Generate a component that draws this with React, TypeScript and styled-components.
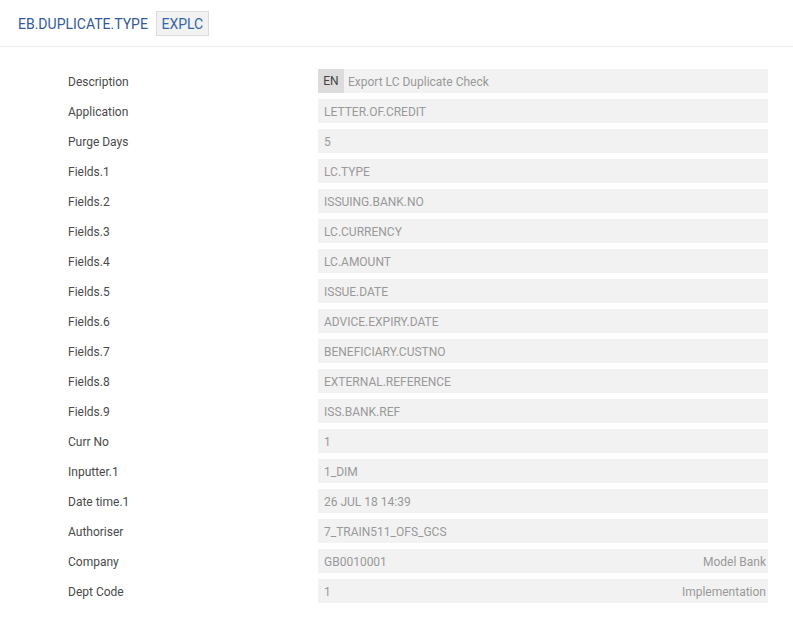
import React from 'react'
import styled, { createGlobalStyle } from 'styled-components'

const GlobalStyle = createGlobalStyle`
  body {
    margin: 0;
    background: #fff;
    font-family: Roboto, "Liberation Sans", sans-serif;
  }
`

type Row = { label: string; value: string; lang?: string; extra?: string }

const rows: Row[] = [
  { label: 'Description', value: 'Export LC Duplicate Check', lang: 'EN' },
  { label: 'Application', value: 'LETTER.OF.CREDIT' },
  { label: 'Purge Days', value: '5' },
  { label: 'Fields.1', value: 'LC.TYPE' },
  { label: 'Fields.2', value: 'ISSUING.BANK.NO' },
  { label: 'Fields.3', value: 'LC.CURRENCY' },
  { label: 'Fields.4', value: 'LC.AMOUNT' },
  { label: 'Fields.5', value: 'ISSUE.DATE' },
  { label: 'Fields.6', value: 'ADVICE.EXPIRY.DATE' },
  { label: 'Fields.7', value: 'BENEFICIARY.CUSTNO' },
  { label: 'Fields.8', value: 'EXTERNAL.REFERENCE' },
  { label: 'Fields.9', value: 'ISS.BANK.REF' },
  { label: 'Curr No', value: '1' },
  { label: 'Inputter.1', value: '1_DIM' },
  { label: 'Date time.1', value: '26 JUL 18 14:39' },
  { label: 'Authoriser', value: '7_TRAIN511_OFS_GCS' },
  { label: 'Company', value: 'GB0010001', extra: 'Model Bank' },
  { label: 'Dept Code', value: '1', extra: 'Implementation' },
]

export default function App() {
  return (
    <>
      <GlobalStyle />
      <Header>
        <Title>EB.DUPLICATE.TYPE</Title>
        <IdBox>EXPLC</IdBox>
      </Header>
      <Form>
        {rows.map((r) => (
          <FieldRow key={r.label}>
            <Label>{r.label}</Label>
            <Field>
              {r.lang && <Lang>{r.lang}</Lang>}
              <Value $afterLang={!!r.lang}>{r.value}</Value>
              {r.extra && <Extra>{r.extra}</Extra>}
            </Field>
          </FieldRow>
        ))}
      </Form>
    </>
  )
}

const Header = styled.div`
  height: 45px;
  padding-top: 1px;
  display: flex;
  align-items: center;
  gap: 8px;
  padding-left: 18px;
  border-bottom: 1px solid #ececec;
`

const Title = styled.div`
  font-size: 14px;
  color: #34599a;
`

const IdBox = styled.div`
  box-sizing: border-box;
  height: 25px;
  width: 53px;
  display: flex;
  align-items: center;
  justify-content: center;
  font-size: 14px;
  color: #3467a8;
  background: #f2f2f2;
  border: 1px solid #dcdcdc;
`

const Form = styled.div`
  padding: 22px 25px 0 68px;
  display: flex;
  flex-direction: column;
  gap: 6px;
`

const FieldRow = styled.div`
  display: flex;
  align-items: center;
  height: 24px;
  padding-top: 1px;
  box-sizing: border-box;
`

const Label = styled.div`
  width: 250px;
  font-size: 12px;
  color: #4a4a4a;
`

const Field = styled.div`
  width: 450px;
  height: 24px;
  margin-top: -1px;
  padding-top: 1px;
  box-sizing: border-box;
  display: flex;
  align-items: center;
  background: #f2f2f2;
  font-size: 12px;
  color: #999;
`

const Lang = styled.div`
  align-self: stretch;
  margin-top: -1px;
  width: 26px;
  display: flex;
  align-items: center;
  justify-content: center;
  background: #dcdcdc;
  color: #444;
`

const Value = styled.div<{ $afterLang?: boolean }>`
  padding-left: ${(p) => (p.$afterLang ? '4px' : '6px')};
  flex: 1;
`

const Extra = styled.div`
  padding-right: 2px;
`
